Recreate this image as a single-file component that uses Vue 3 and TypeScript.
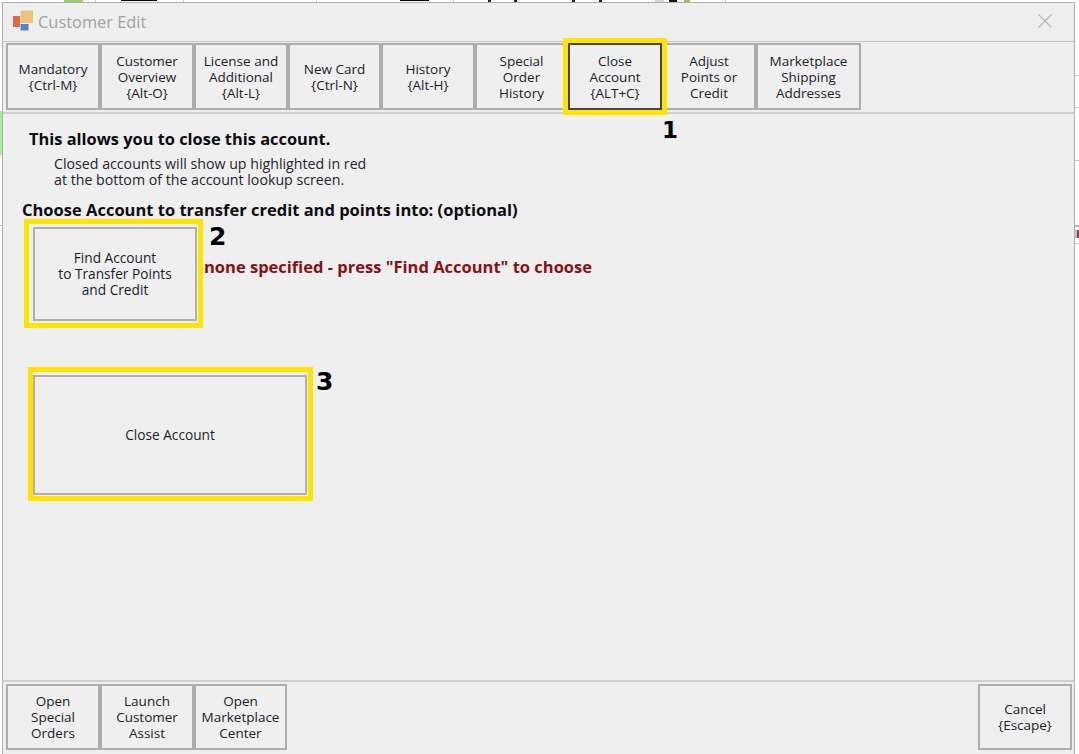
<script setup lang="ts">
interface Btn { lines: string[]; w: number; active?: boolean }
interface Frag { x: number; y: number; w: number; h: number; c: string }
const tabs: Btn[] = [
  { lines: ['Mandatory', '{Ctrl-M}'], w: 94 },
  { lines: ['Customer', 'Overview', '{Alt-O}'], w: 94 },
  { lines: ['License and', 'Additional', '{Alt-L}'], w: 94 },
  { lines: ['New Card', '{Ctrl-N}'], w: 93 },
  { lines: ['History', '{Alt-H}'], w: 94 },
  { lines: ['Special', 'Order', 'History'], w: 93 },
  { lines: ['Close', 'Account', '{ALT+C}'], w: 94, active: true },
  { lines: ['Adjust', 'Points or', 'Credit'], w: 94 },
  { lines: ['Marketplace', 'Shipping', 'Addresses'], w: 105 },
]
const footer: Btn[] = [
  { lines: ['Open', 'Special', 'Orders'], w: 94 },
  { lines: ['Launch', 'Customer', 'Assist'], w: 94 },
  { lines: ['Open', 'Marketplace', 'Center'], w: 93 },
]
// Slivers of the application behind the dialog, visible round its edge.
const fragments: Frag[] = [
  { x: 64, y: 0, w: 19, h: 2, c: '#9ccf6a' },
  { x: 95, y: 0, w: 1, h: 2, c: '#c8c8c8' },
  { x: 121, y: 0, w: 36, h: 1, c: '#000' },
  { x: 183, y: 0, w: 1, h: 2, c: '#c8c8c8' },
  { x: 316, y: 0, w: 1, h: 2, c: '#c8c8c8' },
  { x: 400, y: 0, w: 29, h: 1, c: '#000' },
  { x: 453, y: 0, w: 1, h: 2, c: '#c8c8c8' },
  { x: 488, y: 0, w: 3, h: 2, c: '#222' },
  { x: 514, y: 0, w: 3, h: 2, c: '#222' },
  { x: 572, y: 0, w: 3, h: 2, c: '#222' },
  { x: 599, y: 0, w: 3, h: 2, c: '#222' },
  { x: 655, y: 0, w: 9, h: 2, c: '#d4d4d4' },
  { x: 669, y: 0, w: 8, h: 2, c: '#111' },
  { x: 684, y: 0, w: 6, h: 2, c: '#8cc850' },
  { x: 725, y: 0, w: 1, h: 2, c: '#c8c8c8' },
  { x: 0, y: 111, w: 2, h: 44, c: '#a6f09a' },
  { x: 0, y: 225, w: 2, h: 1, c: '#c0c0c0' },
  { x: 1075, y: 75, w: 4, h: 1, c: '#c8c8c8' },
  { x: 1075, y: 107, w: 4, h: 1, c: '#c8c8c8' },
  { x: 1075, y: 160, w: 4, h: 1, c: '#c8c8c8' },
  { x: 1075, y: 225, w: 4, h: 2, c: '#b8b8b8' },
  { x: 1075, y: 230, w: 2, h: 8, c: '#a8c8e0' },
  { x: 1077, y: 230, w: 2, h: 8, c: '#a83040' },
  { x: 1075, y: 243, w: 4, h: 1, c: '#c8c8c8' },
]
</script>

<template>
  <div class="page">
    <i v-for="f in fragments" :key="f.x + '-' + f.y" class="frag"
      :style="{ left: f.x + 'px', top: f.y + 'px', width: f.w + 'px', height: f.h + 'px', background: f.c }"></i>
    <div class="window">
      <header class="titlebar">
        <svg class="logo" width="21" height="21" viewBox="0 0 21 21">
          <rect x="0" y="6" width="7" height="11" fill="#de6a4a" />
          <rect x="7.5" y="0.5" width="12.5" height="12.5" fill="#edc27c" />
          <rect x="7.5" y="14" width="8" height="6.5" fill="#4f86c0" />
        </svg>
        <span class="title">Customer Edit</span>
        <svg class="close" width="14" height="14" viewBox="0 0 14 14">
          <path d="M0.5 0.5 L13.5 13.5 M13.5 0.5 L0.5 13.5" stroke="#b4b4b4" stroke-width="1.1" fill="none" />
        </svg>
      </header>

      <nav class="bar top">
        <button v-for="t in tabs" :key="t.lines[0] + t.lines[1]" class="btn" :class="{ active: t.active }" :style="{ width: t.w + 'px' }">
          <span v-for="l in t.lines" :key="l">{{ l }}</span>
          <b v-if="t.active" class="num n1">1</b>
        </button>
      </nav>

      <main class="content">
        <h1>This allows you to close this account.</h1>
        <p>Closed accounts will show up highlighted in red<br />at the bottom of the account lookup screen.</p>
        <h2>Choose Account to transfer credit and points into: (optional)</h2>
        <div class="find-row">
          <button class="btn big find">
            <span>Find Account</span>
            <span>to Transfer Points</span>
            <span>and Credit</span>
            <b class="num n2">2</b>
          </button>
          <strong class="none">none specified - press "Find Account" to choose</strong>
        </div>
        <button class="btn big confirm">
          <span>Close Account</span>
          <b class="num n3">3</b>
        </button>
      </main>

      <footer class="bar bottom">
        <button v-for="f in footer" :key="f.lines[1]" class="btn" :style="{ width: f.w + 'px' }">
          <span v-for="l in f.lines" :key="l">{{ l }}</span>
        </button>
        <button class="btn cancel"><span>Cancel</span><span>{Escape}</span></button>
      </footer>
    </div>
  </div>
</template>

<style>
html, body { margin: 0; padding: 0; background: #fff; }
</style>

<style scoped>
.page {
  position: relative;
  width: 1079px;
  height: 754px;
  overflow: hidden;
  padding: 2px 4px 0 2px;
  box-sizing: border-box;
  background: #fff;
  font-family: "Open Sans", "Noto Sans", sans-serif;
  color: #1c1c24;
}
.frag { position: absolute; display: block; }
.window {
  height: 752px;
  box-sizing: border-box;
  background: #efefef;
  border: 1px solid #b0b0b0;
  border-bottom: 0;
  display: flex;
  flex-direction: column;
}
.titlebar {
  height: 38px;
  flex: none;
  display: flex;
  align-items: center;
  padding: 0 22px 0 10px;
  box-sizing: border-box;
}
.logo { flex: none; margin: -3px 5px 0 0; }
.title { font-size: 16.4px; line-height: 20px; margin-left: -1px; color: #a2a2a2; }
.close { margin: -3px 0 0 auto; }
.bar {
  flex: none;
  display: flex;
  padding: 1px 2px 1px 3px;
  box-sizing: border-box;
}
.bar.top {
  height: 73px;
  border-top: 1px solid #c4c4c4;
  border-bottom: 2px solid #cfcfcf;
}
.bar.bottom {
  height: 74px;
  border-top: 2px solid #cfcfcf;
  padding-top: 2px;
  margin-top: auto;
}
.bar.bottom .btn { height: 66px; }
.btn {
  position: relative;
  flex: none;
  height: 67px;
  box-sizing: border-box;
  margin: 0;
  padding: 0;
  background: #efefef;
  border: 2px solid #adadad;
  font: 13.5px/16px "Open Sans", "Noto Sans", sans-serif;
  color: #1c1c28;
  display: flex;
  flex-direction: column;
  align-items: center;
  justify-content: center;
}
.btn span { display: block; white-space: nowrap; }
.btn.active {
  border-color: #444;
  outline: 5px solid #ffe400;
  z-index: 1;
}
.num {
  position: absolute;
  font: 700 25px/28px "DejaVu Sans", sans-serif;
  color: #000;
}
.n1 { left: 92px; top: 71px; font-size: 23px; }
.n2 { left: 174px; top: -6px; }
.n3 { left: 281px; top: -9px; }
.content {
  flex: 1;
  min-height: 0;
  padding: 15px 0 0 19px;
  box-sizing: border-box;
}
h1 {
  margin: 0 0 0 7px;
  font: 700 16.4px/20px "Open Sans", sans-serif;
  color: #0c0c10;
}
p {
  margin: 7px 0 0 32px;
  font: 14.2px/16px "Open Sans", sans-serif;
  color: #24242c;
}
h2 {
  margin: 12px 0 0 0;
  font: 700 16.5px/20px "Open Sans", sans-serif;
  color: #0c0c10;
}
.find-row {
  display: flex;
  margin: 7px 0 0 11px;
}
.btn.big {
  border-color: #b0b0b0;
  font-size: 13.7px;
}
.find { width: 164px; height: 94px; }
.find::before,
.confirm::before {
  content: "";
  position: absolute;
  border: 5px solid #ffe400;
  pointer-events: none;
}
.find::before { inset: -10px -8px -9px -11px; }
.confirm::before { inset: -10px -8px -8px -7px; }
.none {
  margin: 30px 0 0 7px;
  font: 700 16.5px/20px "Open Sans", sans-serif;
  color: #8a0f12;
  white-space: nowrap;
}
.confirm {
  width: 274px;
  height: 120px;
  margin: 54px 0 0 11px;
}
.cancel { width: 94px; margin-left: auto; }
</style>
